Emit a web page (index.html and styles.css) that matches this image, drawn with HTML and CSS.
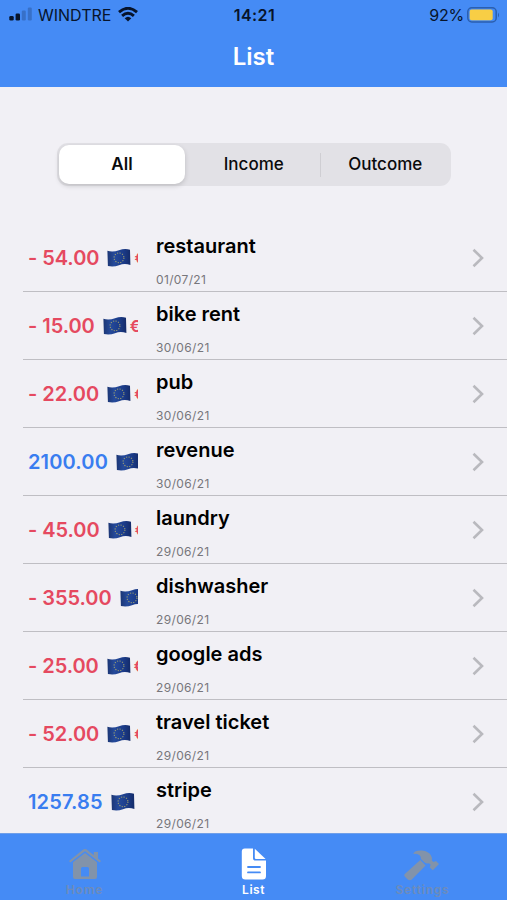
FILE: index.html
```html
<!DOCTYPE html>
<html lang="en">

<head>
    <meta charset="UTF-8" />
    <meta name="viewport" content="width=device-width, initial-scale=1.0" />
    <title>List</title>
    <link rel="stylesheet" href="styles.css">
</head>

<body>
    <header class="header">
        <div class="status">
            <div class="status-left">
                <svg class="signal" width="23" height="15" viewBox="0 0 23 15">
                    <rect x="0.3" y="9" width="4.4" height="4.6" rx="1.3" />
                    <rect x="6.6" y="6.5" width="4.4" height="7.1" rx="1.3" />
                    <rect x="12.8" y="3.5" width="4" height="10.1" rx="1.3" opacity=".22" />
                    <rect x="18.8" y="0.5" width="4" height="13.1" rx="1.3" opacity=".22" />
                </svg>
                <span class="carrier">WINDTRE</span>
                <svg class="wifi" width="20" height="15" viewBox="0 0 20 15" fill="none" stroke="#07142b" stroke-width="2.9">
                    <path d="M1 5.2 Q10 -2.6 19 5.2" />
                    <path d="M4.1 8.8 Q10 3.7 15.9 8.8" />
                    <path d="M6.7 11.2 Q10 8.2 13.3 11.2 L10 14.6 Z" fill="#07142b" stroke="none" />
                </svg>
            </div>
            <span class="time">14:21</span>
            <div class="status-right">
                <span class="percent">92%</span>
                <svg width="33" height="16" viewBox="0 0 33 16">
                    <rect x=".8" y=".8" width="28.4" height="14.2" rx="4" fill="none" stroke="#2b5fae" stroke-width="1.5" />
                    <rect x="2.7" y="2.6" width="23" height="10.6" rx="2" fill="#f8ce45" />
                    <path d="M31 5.4 Q33 7.9 31 10.4 Z" fill="#2b5fae" />
                </svg>
            </div>
        </div>
        <h1 class="title">List</h1>
    </header>

    <main class="content">
        <div class="segments">
            <button class="segment active">All</button>
            <button class="segment">Income</button>
            <button class="segment divided">Outcome</button>
        </div>
        <ul class="list" id="listData"></ul>
    </main>

    <nav class="tabs">
        <a class="tab">
            <svg width="36" height="34" viewBox="0 0 36 34">
                <path d="M2 15 L16.2 3.6 Q18 2.2 19.8 3.6 L26.8 9.2 V6 H31 V12.6 L34 15 L32.6 16.4 L18 5.2 L3.4 16.4 Z" />
                <path d="M6 16.3 L18 7 L30 16.3 V31 Q30 33 28 33 H22 V22.5 Q22 21 20.5 21 H15.5 Q14 21 14 22.5 V30.5 H22 V33 H8 Q6 33 6 31 Z" />
            </svg>
            <span>Home</span>
        </a>
        <a class="tab selected">
            <svg width="36" height="34" viewBox="0 0 36 34">
                <path d="M8.8 2.5 H17 V12 Q17 14.6 19.6 14.6 H30 V30 Q30 33.5 26.5 33.5 H9.3 Q5.8 33.5 5.8 30 V5.5 Q5.8 2.5 8.8 2.5 Z" />
                <path d="M18.8 2.8 L29.6 13 H20 Q18.8 13 18.8 11.8 Z" />
                <path class="lines" d="M12 21 H24 M12 26.4 H24" />
            </svg>
            <span>List</span>
        </a>
        <a class="tab">
            <svg class="hammer" width="36" height="34" viewBox="0 0 36 34">
                <path d="M10.2 7.8 Q12 4 19 4.6 Q25.8 5.4 28 9.6 Q29.4 12 28.9 14.6 L30.4 16 L33 15.1 L36 18 L29.8 24.2 L26.8 21.4 L27.6 18.6 L26 17.2 Q23.6 17.8 21.6 16.4 L18 13 Q18.3 7.6 10.2 7.8 Z" />
                <path d="M17.3 14 L22.6 19.4 L8.8 33.6 Q6.8 35.2 4.4 33.2 L2 30.8 Q.3 28.9 2.6 27.2 Z" />
            </svg>
            <span>Settings</span>
        </a>
    </nav>

    <!-- shared icons -->
    <svg class="sprite">
        <linearGradient id="cloth">
            <stop offset="0" stop-color="#1c3674" />
            <stop offset=".3" stop-color="#254a9b" />
            <stop offset=".7" stop-color="#1b3b88" />
            <stop offset="1" stop-color="#142b69" />
        </linearGradient>
        <symbol id="flag" viewBox="0 0 24 18">
            <path d="M.4 1.8 Q6 3.2 12 1.2 T23 .8 L23.4 16 Q17.5 14.1 12 16.2 T.9 17 Z" fill="url(#cloth)" />
            <circle cx="12" cy="8.8" r="4.9" fill="none" stroke="#a3a36c" stroke-width="1.1" stroke-dasharray="1.1 1.466" />
        </symbol>
        <symbol id="chevron" viewBox="0 0 12 20">
            <path d="M1.5 1.8 L10 10 L1.5 18.2" fill="none" stroke="#b9b9be" stroke-width="2.6" />
        </symbol>
    </svg>

    <script>
        let listData = document.querySelector("#listData");

        let arrItems = [
            { amount: "- 54.00", name: "restaurant", date: "01/07/21" },
            { amount: "- 15.00", name: "bike rent", date: "30/06/21" },
            { amount: "- 22.00", name: "pub", date: "30/06/21" },
            { amount: "2100.00", name: "revenue", date: "30/06/21" },
            { amount: "- 45.00", name: "laundry", date: "29/06/21" },
            { amount: "- 355.00", name: "dishwasher", date: "29/06/21" },
            { amount: "- 25.00", name: "google ads", date: "29/06/21" },
            { amount: "- 52.00", name: "travel ticket", date: "29/06/21" },
            { amount: "1257.85", name: "stripe", date: "29/06/21" },
        ];

        const renderData = () => {
            let htmls = arrItems.map((item) => {
                let type = item.amount.startsWith("-") ? "outcome" : "income";
                return `
                <li class="row">
                    <div class="amount ${type}">
                        <span>${item.amount}</span>
                        <svg class="flag"><use href="#flag" /></svg>
                        <span class="currency">€</span>
                    </div>
                    <div class="info">
                        <h2 class="name">${item.name}</h2>
                        <p class="date">${item.date}</p>
                    </div>
                    <svg class="chevron"><use href="#chevron" /></svg>
                </li>
            `;
            });
            listData.innerHTML = htmls.join("");
        };
        renderData();
    </script>
</body>

</html>
```
FILE: styles.css
```css
* {
    margin: 0;
    padding: 0;
    box-sizing: border-box;
    font-family: Inter, "Liberation Sans", sans-serif;
}

body {
    display: flex;
    flex-direction: column;
    height: 100vh;
    overflow: hidden;
    background-color: #f1f0f5;
}

.header {
    height: 87px;
    flex-shrink: 0;
    background-color: #458bf5;
}

.status {
    display: grid;
    grid-template-columns: 1fr auto 1fr;
    align-items: center;
    height: 29px;
    padding: 0 7px 0 9px;
    color: #07142b;
    font-size: 16px;
}

.status-left,
.status-right {
    display: flex;
    align-items: center;
}

.status-right {
    justify-content: flex-end;
    gap: 3px;
}

.signal {
    fill: #07142b;
}

.carrier {
    margin-left: 6px;
}

.percent {
    letter-spacing: -0.2px;
}

.wifi {
    margin-left: 7px;
}

.time {
    font-weight: 600;
    letter-spacing: 0.4px;
}

.title {
    text-align: center;
    color: #fff;
    font-size: 24px;
    font-weight: 600;
    line-height: 56px;
}

.content {
    flex: 1;
    min-height: 0;
    overflow: hidden;
}

.segments {
    display: flex;
    width: 394px;
    height: 43px;
    margin: 56px 0 38px 57px;
    padding: 2px 0 2px 2px;
    border-radius: 11px;
    background-color: #e2e1e6;
}

.segment {
    flex: 1;
    padding-bottom: 1px;
    border: none;
    background: none;
    color: #0a0a0c;
    font-size: 17px;
    font-weight: 500;
}

.segment.active {
    flex: 0 0 126px;
    margin-right: 3px;
    border-radius: 10px;
    background-color: #fff;
    box-shadow: 0 2px 5px rgba(0, 0, 0, 0.16);
    font-weight: 600;
}

.segment.divided {
    background: linear-gradient(#cfced3, #cfced3) no-repeat 0 center / 1px 24px;
}

.list {
    list-style: none;
    padding-left: 23px;
}

.row {
    display: flex;
    height: 68px;
    padding: 0 23px 0 5px;
    border-bottom: 1px solid #bfbec3;
}

.amount {
    display: flex;
    align-items: center;
    width: 110px;
    margin-right: 18px;
    overflow: hidden;
    white-space: nowrap;
    font-size: 20px;
    font-weight: 600;
}

.outcome {
    color: #e54960;
    letter-spacing: -0.05px;
}

.income {
    color: #397df0;
    letter-spacing: 0.15px;
}

.flag {
    flex-shrink: 0;
    width: 24px;
    height: 18px;
    margin: 0 3px 0 8px;
}

.currency {
    font-size: 16px;
}

.info {
    flex: 1;
}

.name {
    margin-top: 8px;
    font-size: 20px;
    font-weight: 600;
    line-height: 28px;
}

.date {
    margin-top: 12px;
    color: #77767b;
    font-size: 12px;
    letter-spacing: 0.35px;
    line-height: 16px;
}

.chevron {
    width: 12px;
    height: 20px;
    align-self: center;
}

.tabs {
    display: flex;
    height: 67px;
    flex-shrink: 0;
    background-color: #458bf5;
    border-top: 1px solid #6f9fe9;
}

.tab {
    flex: 1;
    display: flex;
    flex-direction: column;
    align-items: center;
    padding-top: 12px;
    color: #6d8cbb;
    font-size: 12px;
    font-weight: 600;
    letter-spacing: 0.8px;
    line-height: 20px;
}

.tab svg {
    width: 36px;
    height: 34px;
    overflow: visible;
    fill: #8293aa;
}

.tab .hammer {
    margin-left: -3px;
}

.tab.selected {
    color: #fff;
    letter-spacing: 0.5px;
}

.tab.selected svg {
    fill: #fff;
}

.lines {
    stroke: #458bf5;
    stroke-width: 1.8;
    stroke-linecap: round;
}

.sprite {
    position: absolute;
    width: 0;
    height: 0;
}
```
